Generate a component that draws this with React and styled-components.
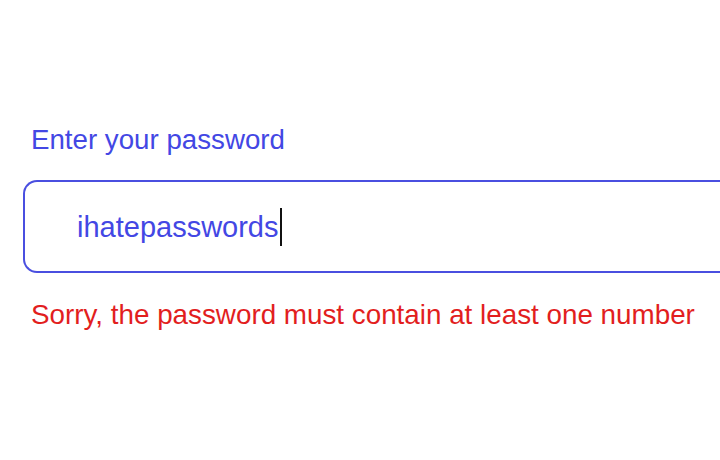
import React from 'react';
import styled, { createGlobalStyle } from 'styled-components';

const GlobalStyle = createGlobalStyle`
  html, body {
    margin: 0;
    padding: 0;
    background: #ffffff;
  }
  body {
    font-family: 'Liberation Sans', Arial, sans-serif;
    overflow: hidden;
  }
`;

const Page = styled.div`
  width: 720px;
  height: 460px;
  padding-top: 122px;
  box-sizing: border-box;
`;

const Field = styled.div`
  display: flex;
  flex-direction: column;
  padding-left: 23px;
`;

const Label = styled.label`
  font-size: 27.7px;
  line-height: 36px;
  color: #4347e4;
  padding-left: 8px;
  margin-bottom: 22px;
`;

const InputBox = styled.div`
  display: flex;
  align-items: center;
  height: 93px;
  box-sizing: border-box;
  border: 2px solid #4a4fe0;
  border-right: none;
  border-radius: 14px 0 0 14px;
  padding-left: 52px;
`;

const Value = styled.span`
  font-size: 29px;
  line-height: 38px;
  color: #4347e4;
`;

const Caret = styled.span`
  display: inline-block;
  width: 2px;
  height: 38px;
  margin-left: 1px;
  background: #111111;
`;

const ErrorText = styled.p`
  margin: 24px 0 0 8px;
  font-size: 27.8px;
  line-height: 36px;
  color: #e21e1e;
`;

const App = () => {
  return (
    <Page>
      <GlobalStyle />
      <Field>
        <Label>Enter your password</Label>
        <InputBox>
          <Value>ihatepasswords</Value>
          <Caret />
        </InputBox>
        <ErrorText>Sorry, the password must contain at least one number</ErrorText>
      </Field>
    </Page>
  );
};

export default App;
